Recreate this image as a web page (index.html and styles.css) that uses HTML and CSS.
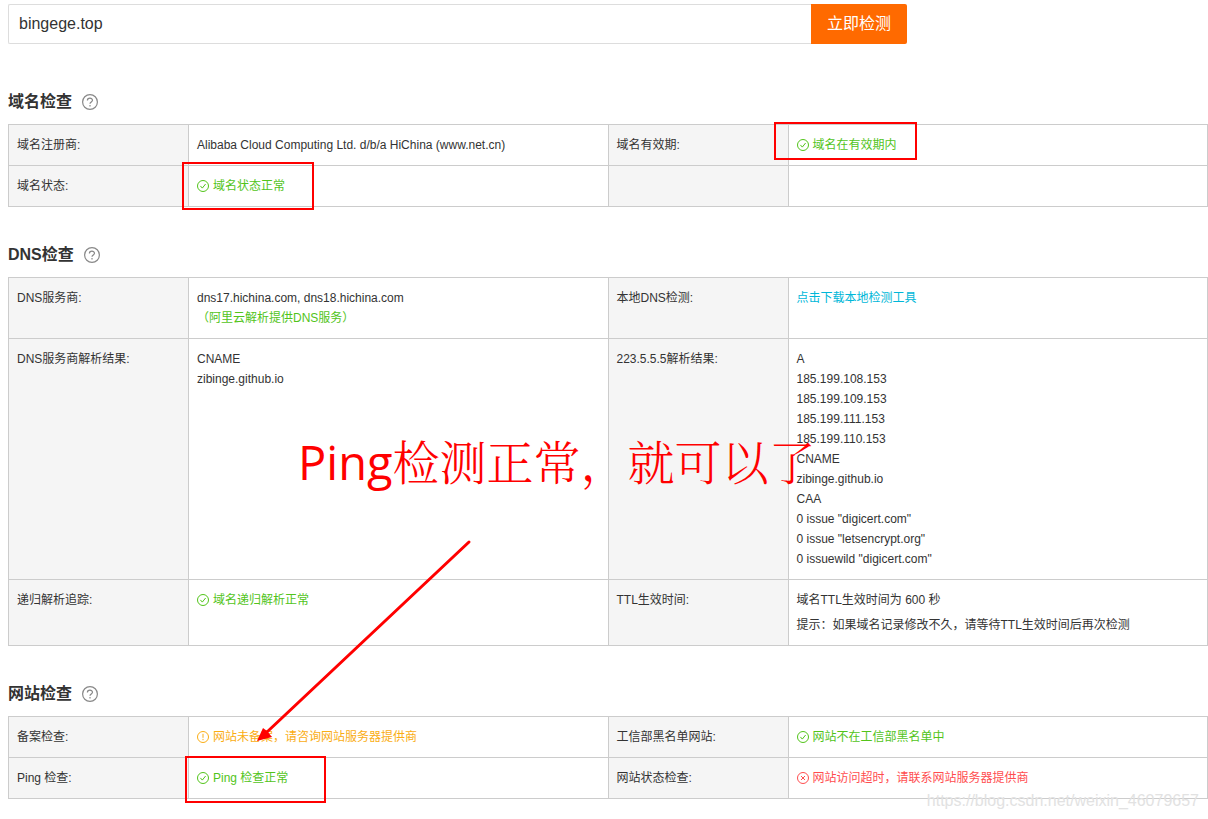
FILE: index.html
```html
<!DOCTYPE html>
<html lang="zh-CN">
<head>
<meta charset="utf-8">
<title>域名检测</title>
<link rel="stylesheet" href="styles.css">
</head>
<body>
<svg class="symbols" aria-hidden="true">
  <symbol id="ok" viewBox="0 0 12 12"><circle cx="6" cy="6" r="5.5"/><path d="M3.4 5.9 5.3 8.1 8.6 4"/></symbol>
  <symbol id="warn" viewBox="0 0 12 12"><circle cx="6" cy="6" r="5.5"/><path d="M6 2.8v4M6 7.9v1.3"/></symbol>
  <symbol id="fail" viewBox="0 0 12 12"><circle cx="6" cy="6" r="5.5"/><path d="M4 4l4 4M8 4 4 8"/></symbol>
  <symbol id="help" viewBox="0 0 16 16"><circle cx="8" cy="8" r="7.4"/><path d="M5.4 6.4C5.4 3.4 10.5 3.4 10.5 6.3 10.5 8 8 8 8 9.8M8 11v1.5"/></symbol>
</svg>
<main class="page">
  <form class="search">
    <input class="search-input" type="text" value="bingege.top" aria-label="域名">
    <button class="search-button" type="button">立即检测</button>
  </form>

  <section class="section">
    <h2 class="title">域名检查<svg class="help"><use href="#help"/></svg></h2>
    <table class="results">
      <tr>
        <th scope="row">域名注册商:</th>
        <td>Alibaba Cloud Computing Ltd. d/b/a HiChina (www.net.cn)</td>
        <th scope="row">域名有效期:</th>
        <td><span class="status ok"><svg class="icon"><use href="#ok"/></svg>域名在有效期内</span></td>
      </tr>
      <tr>
        <th scope="row">域名状态:</th>
        <td><span class="status ok"><svg class="icon"><use href="#ok"/></svg>域名状态正常</span></td>
        <th></th>
        <td></td>
      </tr>
    </table>
  </section>

  <section class="section">
    <h2 class="title">DNS检查<svg class="help"><use href="#help"/></svg></h2>
    <table class="results">
      <tr>
        <th scope="row">DNS服务商:</th>
        <td>dns17.hichina.com, dns18.hichina.com<br><span class="ok">（阿里云解析提供DNS服务）</span></td>
        <th scope="row">本地DNS检测:</th>
        <td><a class="link" href="#">点击下载本地检测工具</a></td>
      </tr>
      <tr>
        <th scope="row">DNS服务商解析结果:</th>
        <td>CNAME<br>zibinge.github.io</td>
        <th scope="row">223.5.5.5解析结果:</th>
        <td>A<br>185.199.108.153<br>185.199.109.153<br>185.199.111.153<br>185.199.110.153<br>CNAME<br>zibinge.github.io<br>CAA<br>0 issue "digicert.com"<br>0 issue "letsencrypt.org"<br>0 issuewild "digicert.com"</td>
      </tr>
      <tr>
        <th scope="row">递归解析追踪:</th>
        <td><span class="status ok"><svg class="icon"><use href="#ok"/></svg>域名递归解析正常</span></td>
        <th scope="row">TTL生效时间:</th>
        <td>域名TTL生效时间为 600 秒<p class="hint">提示：如果域名记录修改不久，请等待TTL生效时间后再次检测</p></td>
      </tr>
    </table>
  </section>

  <section class="section">
    <h2 class="title">网站检查<svg class="help"><use href="#help"/></svg></h2>
    <table class="results">
      <tr>
        <th scope="row">备案检查:</th>
        <td><span class="status warn"><svg class="icon"><use href="#warn"/></svg>网站未备案，请咨询网站服务器提供商</span></td>
        <th scope="row">工信部黑名单网站:</th>
        <td><span class="status ok"><svg class="icon"><use href="#ok"/></svg>网站不在工信部黑名单中</span></td>
      </tr>
      <tr>
        <th scope="row">Ping 检查:</th>
        <td><span class="status ok"><svg class="icon"><use href="#ok"/></svg>Ping 检查正常</span></td>
        <th scope="row">网站状态检查:</th>
        <td><span class="status fail"><svg class="icon"><use href="#fail"/></svg>网站访问超时，请联系网站服务器提供商</span></td>
      </tr>
    </table>
  </section>

  <div class="mark mark-expiry"></div>
  <div class="mark mark-state"></div>
  <div class="mark mark-ping"></div>
  <div class="callout"><span class="callout-latin">Ping</span>检测正常，就可以了</div>
  <svg class="arrow" viewBox="0 0 216 204" aria-hidden="true">
    <path class="shaft" d="M212 3 10 193"/>
    <path class="head" d="M0 202 6 189 10 192 15 198Z"/>
  </svg>
  <div class="watermark">https://blog.csdn.net/weixin_46079657</div>
</main>
</body>
</html>
```

FILE: styles.css
```css
* {
  box-sizing: border-box;
}

body {
  margin: 0;
  background: #fff;
  color: #333;
  font: 12px/20px "Liberation Sans", "Noto Sans CJK SC", sans-serif;
}

.symbols {
  position: absolute;
  width: 0;
  height: 0;
}

symbol {
  fill: none;
  stroke: currentColor;
}

.page {
  position: relative;
  padding: 4px 0 20px 8px;
}

.search {
  display: flex;
  max-width: 899px;
  height: 40px;
}

.search-input {
  flex: 1;
  min-width: 0;
  padding: 0 10px;
  border: 1px solid #ddd;
  border-right: 0;
  border-radius: 2px 0 0 2px;
  color: #333;
  font: inherit;
  font-size: 16px;
}

.search-button {
  width: 96px;
  padding: 0;
  border: 0;
  border-radius: 0 2px 2px 0;
  background: #ff6a00;
  color: #fff;
  font: inherit;
  font-size: 16px;
}

.section {
  padding-top: 36px;
}

.search + .section {
  padding-top: 46px;
}

.title {
  display: flex;
  align-items: center;
  gap: 10px;
  margin: 0 0 10px;
  font-size: 16px;
  line-height: 24px;
}

.help {
  width: 16px;
  height: 16px;
  color: #888;
  stroke-width: 1.2;
}

.results {
  width: 100%;
  border-collapse: collapse;
  table-layout: fixed;
}

.results th,
.results td {
  padding: 10px 8px;
  border: 1px solid #ccc;
  font-weight: 400;
  text-align: left;
  vertical-align: top;
}

.results th {
  width: 180px;
  background: #f5f5f5;
}

.status {
  display: flex;
  align-items: center;
  gap: 4px;
}

.icon {
  width: 12px;
  height: 12px;
}

.ok {
  color: #52c41a;
}

.warn {
  color: #faad14;
}

.fail {
  color: #ff4d4f;
}

.link {
  color: #00b7d8;
  text-decoration: none;
}

.hint {
  margin: 5px 0 0;
}

.mark {
  position: absolute;
  border: 2px solid #f00;
}

.mark-expiry {
  left: 774px;
  top: 122px;
  width: 143px;
  height: 38px;
}

.mark-state {
  left: 182px;
  top: 162px;
  width: 132px;
  height: 48px;
}

.mark-ping {
  left: 185px;
  top: 756px;
  width: 141px;
  height: 47px;
}

.callout {
  position: absolute;
  left: 298px;
  top: 428px;
  color: #f00;
  font: 300 47px/64px "Noto Serif CJK SC", "Noto Sans CJK SC", sans-serif;
  white-space: nowrap;
}

.callout-latin {
  font-family: "Open Sans", sans-serif;
  font-weight: 400;
}

.callout,
.arrow,
.mark,
.watermark {
  pointer-events: none;
}

.arrow {
  position: absolute;
  left: 257px;
  top: 539px;
  width: 216px;
  height: 204px;
}

.shaft {
  stroke: #f00;
  stroke-width: 3;
  stroke-linecap: round;
}

.head {
  fill: #f00;
}

.watermark {
  position: absolute;
  right: 9px;
  bottom: 8px;
  color: #e2e2e2;
  font-size: 16px;
}
```
